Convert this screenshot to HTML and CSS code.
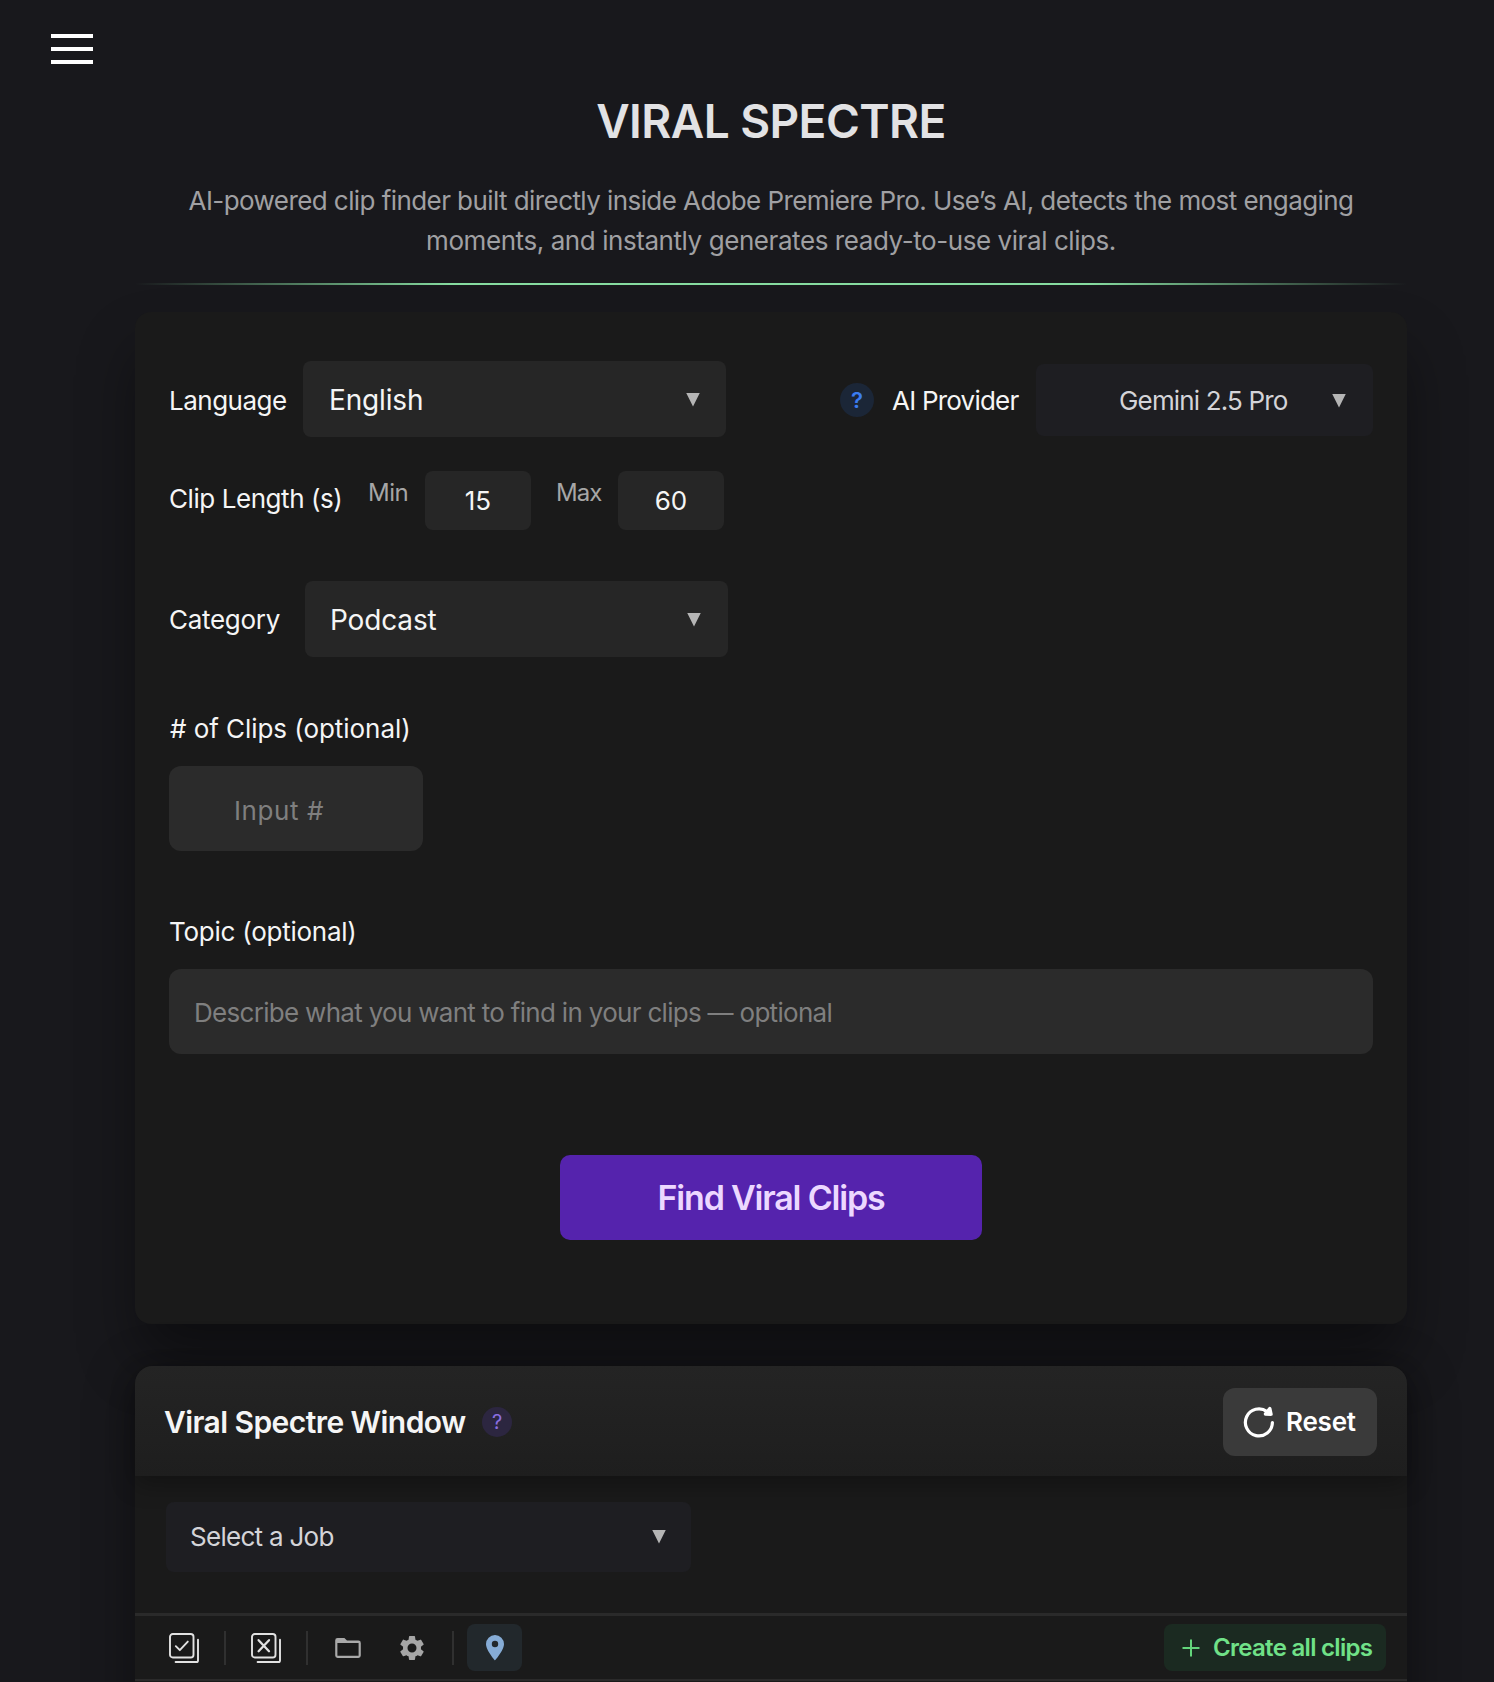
FILE: index.html
```html
<!DOCTYPE html>
<html lang="en">
<head>
    <meta charset="UTF-8">
    <meta name="viewport" content="width=device-width, initial-scale=1.0">
    <title>Viral Spectre</title>
    <link rel="stylesheet" href="styles.css">
</head>
<body>
    <button class="menu-btn" id="menu-btn" aria-label="Menu">
        <span></span>
        <span></span>
        <span></span>
    </button>

    <div class="container">
        <header class="header">
            <h1>VIRAL SPECTRE</h1>
            <p><span class="line-one">AI-powered clip finder built directly inside Adobe Premiere Pro. Use’s AI, detects the most engaging</span><br><span class="line-two">moments, and instantly generates ready-to-use viral clips.</span></p>
            <div class="divider"></div>
        </header>

        <!-- Search settings -->
        <section class="card">
            <div class="row">
                <span class="label label-language">Language</span>
                <div class="select"><span class="value-english">English</span><i class="arrow"></i></div>
                <div class="provider">
                    <span class="help help-blue">?</span>
                    <span class="label label-provider">AI Provider</span>
                    <div class="select-dark provider-select"><span class="value-gemini">Gemini 2.5 Pro</span><i class="arrow"></i></div>
                </div>
            </div>

            <div class="row row-length">
                <span class="label label-length">Clip Length (s)</span>
                <span class="sub-label label-min">Min</span>
                <div class="num-box">15</div>
                <span class="sub-label label-max">Max</span>
                <div class="num-box">60</div>
            </div>

            <div class="row row-category">
                <span class="label label-category">Category</span>
                <div class="select select-category"><span class="value-podcast">Podcast</span><i class="arrow"></i></div>
            </div>

            <div class="field field-clips">
                <span class="label label-clips"># of Clips (optional)</span>
                <div class="input input-small">Input #</div>
            </div>

            <div class="field field-topic">
                <span class="label label-topic">Topic (optional)</span>
                <div class="input input-topic">Describe what you want to find in your clips — optional</div>
            </div>

            <button class="find-btn" id="find-btn">Find Viral Clips</button>
        </section>

        <!-- Results window -->
        <section class="window">
            <div class="window-header">
                <h2>Viral Spectre Window</h2>
                <span class="help help-purple">?</span>
                <button class="reset-btn" id="reset-btn">
                    <svg width="34" height="34" viewBox="0 0 34 34" fill="none" stroke="#fff" stroke-width="3.2" stroke-linecap="round" stroke-linejoin="round">
                        <path d="M30.4 17.5A13.5 13.5 0 1 1 25 6.6"/>
                        <path d="M27.8 3.6l1.2 5.6-5.6-.2z" fill="#fff" stroke-width="3.4"/>
                    </svg>
                    <span>Reset</span>
                </button>
            </div>

            <div class="window-body">
                <div class="select-dark job-select"><span class="value-job">Select a Job</span><i class="arrow"></i></div>
            </div>

            <div class="toolbar">
                <svg class="tool-check" width="30" height="30" viewBox="0 0 30 30" fill="none" stroke="#e2e2e2" stroke-width="1.9" stroke-linecap="round" stroke-linejoin="round">
                    <rect x="1" y="1" width="23.5" height="23.5" rx="2.8"/>
                    <path d="M6.8 13.2l4 4 8-8.6"/>
                    <path d="M29 6.8V27.4a1.6 1.6 0 0 1-1.6 1.6H6.6"/>
                </svg>
                <i class="sep sep-one"></i>
                <svg class="tool-x" width="30" height="30" viewBox="0 0 30 30" fill="none" stroke="#e2e2e2" stroke-width="1.9" stroke-linecap="round" stroke-linejoin="round">
                    <rect x="1" y="1" width="23.5" height="23.5" rx="2.8"/>
                    <path d="M7.6 7.2l10.4 11M18 7.2l-10.4 11" stroke-width="2.3"/>
                    <path d="M29 6.8V27.4a1.6 1.6 0 0 1-1.6 1.6H6.6"/>
                </svg>
                <i class="sep sep-two"></i>
                <svg class="tool-folder" width="26" height="20" viewBox="0 0 26 20">
                    <path d="M2.6 0H9.4L12 2.6H23.4A2.4 2.4 0 0 1 25.8 5V17.6A2.4 2.4 0 0 1 23.4 20H2.6A2.4 2.4 0 0 1 .2 17.6V2.4A2.4 2.4 0 0 1 2.6 0zM2.4 5V17.8H23.6V5z" fill="#a9a9a9" fill-rule="evenodd"/>
                </svg>
                <svg class="tool-gear" width="30" height="30" viewBox="0 0 24 24" fill="#a6a6a6">
                    <path d="M19.14 12.94c.04-.3.06-.61.06-.94 0-.32-.02-.64-.07-.94l2.03-1.58a.49.49 0 0 0 .12-.61l-1.92-3.32a.488.488 0 0 0-.59-.22l-2.39.96c-.5-.38-1.03-.7-1.62-.94l-.36-2.54a.484.484 0 0 0-.48-.41h-3.84c-.24 0-.43.17-.47.41l-.36 2.54c-.59.24-1.13.57-1.62.94l-2.39-.96c-.22-.08-.47 0-.59.22L2.74 8.87c-.12.21-.08.47.12.61l2.03 1.58c-.05.3-.09.63-.09.94s.02.64.07.94l-2.03 1.58a.49.49 0 0 0-.12.61l1.92 3.32c.12.22.37.29.59.22l2.39-.96c.5.38 1.03.7 1.62.94l.36 2.54c.05.24.24.41.48.41h3.84c.24 0 .44-.17.47-.41l.36-2.54c.59-.24 1.13-.56 1.62-.94l2.39.96c.22.08.47 0 .59-.22l1.92-3.32c.12-.22.07-.47-.12-.61l-2.01-1.58zM12 15.6a3.6 3.6 0 1 1 0-7.2 3.6 3.6 0 0 1 0 7.2z"/>
                </svg>
                <i class="sep sep-three"></i>
                <button class="pin-btn" aria-label="Markers">
                    <svg width="18" height="26" viewBox="0 0 18 26">
                        <path d="M9 0A9 9 0 0 0 0 9C0 15.4 9 25.4 9 25.4S18 15.4 18 9A9 9 0 0 0 9 0zM9 12.2A3.2 3.2 0 1 1 9 5.8A3.2 3.2 0 0 1 9 12.2z" fill="#86acd6"/>
                    </svg>
                </button>
                <button class="create-btn" id="create-btn">
                    <svg width="18" height="18" viewBox="0 0 18 18" stroke="#63d57b" stroke-width="2">
                        <path d="M9 0.5V17.5M0.5 9H17.5"/>
                    </svg>
                    <span>Create all clips</span>
                </button>
            </div>
        </section>
    </div>
</body>
</html>
```
FILE: styles.css
```css
* {
    box-sizing: border-box;
}

body {
    margin: 0;
    height: 1682px;
    overflow: hidden;
    background: #18181c;
    color: #f5f5f5;
    font-family: Inter, "Liberation Sans", sans-serif;
    font-size: 26px;
}

button {
    border: none;
    padding: 0;
    font-family: inherit;
    cursor: pointer;
}

.menu-btn {
    display: flex;
    flex-direction: column;
    gap: 9px;
    width: 42px;
    margin: 34px 0 0 51px;
    background: none;
}

.menu-btn span {
    width: 42px;
    height: 4px;
    background: #fff;
}

.container {
    width: 1272px;
    margin-left: 135px;
}

/* Header */
.header {
    text-align: center;
    white-space: nowrap;
}

.header h1 {
    margin: 27px 0 0;
    font-size: 46px;
    font-weight: 600;
    line-height: 60px;
    letter-spacing: -0.55px;
    color: #e2e2e4;
}

.header p {
    margin: 30px 0 0;
    line-height: 40px;
    color: #a0a0a3;
}

.line-one {
    letter-spacing: -0.575px;
}

.line-two {
    letter-spacing: -0.43px;
}

.divider {
    height: 2px;
    margin-top: 22px;
    background: linear-gradient(90deg, transparent, #86dca0 25%, #86dca0 75%, transparent);
}

/* Settings card */
.card {
    height: 1012px;
    margin-top: 27px;
    padding: 49px 34px 0;
    background: #1a1a1a;
    border-radius: 16px;
    box-shadow: 0 36px 60px -4px rgba(0, 0, 0, 0.42);
}

.row {
    display: flex;
    align-items: center;
    height: 76px;
    white-space: nowrap;
}

.label {
    padding-top: 3px;
    line-height: 32px;
}

.label-language {
    width: 134px;
    letter-spacing: -0.5px;
}

.select,
.select-dark {
    display: flex;
    align-items: center;
    justify-content: space-between;
    white-space: nowrap;
}

.select {
    width: 423px;
    height: 76px;
    padding: 1px 26px 0;
    font-size: 28px;
    letter-spacing: -0.15px;
    background: #262626;
    border-radius: 8px;
}

.select-dark {
    color: #d4d4d8;
    background: #1e1e22;
    border-radius: 8px;
}

.arrow {
    width: 14px;
    height: 14px;
    background: #b5b5b5;
    clip-path: polygon(0 0, 100% 0, 50% 100%);
}

.provider {
    display: flex;
    align-items: center;
    margin: 2px 0 0 114px;
}

.help {
    display: flex;
    align-items: center;
    justify-content: center;
    border-radius: 50%;
}

.help-blue {
    width: 34px;
    height: 34px;
    font-size: 22px;
    font-weight: 600;
    color: #3b7cf0;
    background: #1b2637;
}

.label-provider {
    width: 144px;
    margin-left: 18px;
    padding-top: 1px;
    letter-spacing: -0.78px;
}

.provider-select {
    width: 337px;
    height: 72px;
    padding: 1px 27px 0 83px;
    letter-spacing: -0.84px;
}

.row-length {
    align-items: flex-start;
    height: 59px;
    margin-top: 34px;
}

.label-length {
    width: 199px;
    padding-top: 12px;
    letter-spacing: -0.43px;
}

.sub-label {
    padding-top: 6px;
    font-size: 24px;
    line-height: 32px;
    letter-spacing: -0.5px;
    color: #a6a6a6;
}

.label-min {
    width: 57px;
}

.label-max {
    width: 62px;
    margin-left: 25px;
    letter-spacing: -1px;
}

.num-box {
    width: 106px;
    height: 59px;
    line-height: 60px;
    text-align: center;
    background: #262626;
    border-radius: 8px;
}

.row-category {
    margin-top: 51px;
}

.label-category {
    width: 136px;
    padding-top: 2px;
    letter-spacing: -0.3px;
}

.select-category {
    padding: 1px 27px 0 25px;
}

.field {
    display: flex;
    flex-direction: column;
    align-items: flex-start;
    gap: 22px;
    white-space: nowrap;
}

.field .label {
    height: 32px;
    padding-top: 1px;
}

.field-clips {
    margin-top: 55px;
}

.field-topic {
    margin-top: 64px;
}

.label-clips {
    padding-left: 1px;
    letter-spacing: -0.05px;
}

.label-topic {
    letter-spacing: -0.25px;
}

.input {
    height: 85px;
    line-height: 88px;
    color: #7f7f7f;
    background: #2b2b2b;
    border-radius: 12px;
}

.input-small {
    width: 254px;
    padding-left: 65px;
    line-height: 90px;
    letter-spacing: 0.6px;
}

.input-topic {
    width: 1204px;
    padding-left: 25px;
    letter-spacing: -0.7px;
}

.find-btn {
    display: block;
    width: 422px;
    height: 85px;
    margin: 101px auto 0;
    font-size: 34px;
    font-weight: 600;
    letter-spacing: -1.2px;
    color: #ecd8ff;
    background: #5523ad;
    border-radius: 10px;
}

/* Results window */
.window {
    height: 400px;
    margin-top: 42px;
    background: #1a1a1a;
    border-radius: 18px 18px 0 0;
    box-shadow: 0 10px 50px rgba(0, 0, 0, 0.4);
}

.window-header {
    display: flex;
    align-items: center;
    height: 110px;
    padding: 1px 30px 0 29px;
    background: linear-gradient(#242424, #1e1e1e);
    border-radius: 18px 18px 0 0;
    box-shadow: 0 8px 24px rgba(0, 0, 0, 0.3);
}

.window-header h2 {
    width: 318px;
    margin: 1px 0 0;
    font-size: 30px;
    font-weight: 600;
    letter-spacing: -0.57px;
    white-space: nowrap;
}

.help-purple {
    width: 30px;
    height: 30px;
    font-size: 20px;
    color: #8b6fe0;
    background: #2c2640;
}

.reset-btn {
    display: flex;
    align-items: center;
    gap: 10px;
    width: 154px;
    height: 68px;
    margin-left: auto;
    padding-left: 19px;
    font-size: 26px;
    font-weight: 600;
    letter-spacing: -0.2px;
    color: #fff;
    background: #3a3a3a;
    border-radius: 12px;
}

.window-body {
    height: 137px;
    padding: 26px 31px 0;
}

.job-select {
    width: 525px;
    height: 70px;
    padding: 0 25px 1px 24px;
    letter-spacing: -0.72px;
}

.toolbar {
    display: flex;
    align-items: center;
    height: 68px;
    padding: 0 21px 0 34px;
    border-top: 3px solid #2a2a2a;
    border-bottom: 2px solid #2a2a2a;
}

.sep {
    width: 2px;
    height: 34px;
    background: #303030;
}

.sep-one {
    margin: 0 25px;
}

.sep-two {
    margin: 0 27px 0 25px;
}

.tool-gear {
    margin: 0 25px 0 36px;
}

.pin-btn {
    display: flex;
    align-items: center;
    justify-content: center;
    width: 55px;
    height: 47px;
    margin-left: 13px;
    background: #22282c;
    border-radius: 8px;
}

.create-btn {
    display: flex;
    align-items: center;
    gap: 13px;
    width: 222px;
    height: 47px;
    margin-left: auto;
    padding-left: 18px;
    font-size: 24px;
    font-weight: 600;
    letter-spacing: -0.7px;
    white-space: nowrap;
    color: #70e188;
    background: #1b2a21;
    border-radius: 8px;
}
```
